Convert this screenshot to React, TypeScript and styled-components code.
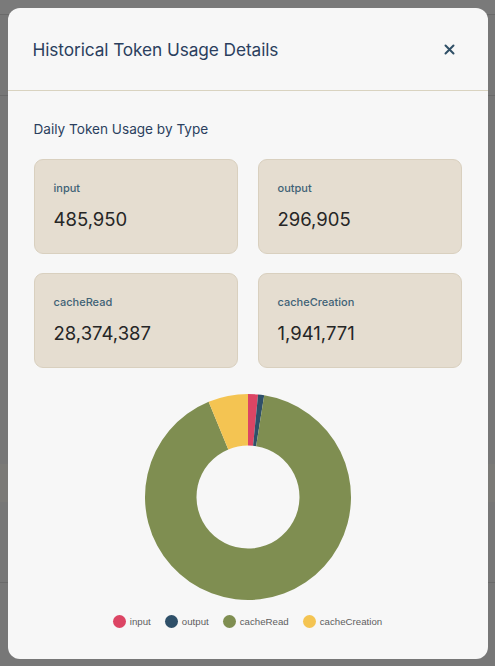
import React from "react";
import styled, { createGlobalStyle } from "styled-components";

const GlobalStyle = createGlobalStyle`
  html, body { margin: 0; padding: 0; }
  body {
    background: #777777;
    font-family: Inter, "Noto Sans", "Liberation Sans", sans-serif;
    -webkit-font-smoothing: antialiased;
  }
`;

const Screen = styled.div`
  position: relative;
  width: 495px;
  height: 666px;
  overflow: hidden;
  background: #777777;
`;

/* dimmed page content behind the overlay */
const BehindPage = styled.div`
  display: flex;
  flex-direction: column;
  height: 100%;
`;

const BehindBar = styled.div<{ $h: number; $bg?: string; $line?: boolean }>`
  height: ${(p) => p.$h}px;
  flex: none;
  background: ${(p) => p.$bg ?? "transparent"};
  border-bottom: ${(p) => (p.$line ? "1px solid #6a6a6a" : "none")};
`;

const Overlay = styled.div`
  position: absolute;
  inset: 0;
  display: flex;
  justify-content: center;
  padding-top: 8px;
  box-sizing: border-box;
`;

const Modal = styled.div`
  width: 480px;
  height: 651px;
  background: #f7f7f7;
  border-radius: 12px;
  display: flex;
  flex-direction: column;
  overflow: hidden;
`;

const Header = styled.div`
  height: 82px;
  flex: none;
  display: flex;
  align-items: center;
  justify-content: space-between;
  padding: 0 30px 0 25px;
  border-bottom: 1px solid #d9d3c0;
`;

const Title = styled.h2`
  margin: 0;
  margin-top: 1px;
  font-size: 17.3px;
  font-weight: 400;
  color: #2b3f5e;
  letter-spacing: -0.1px;
`;

const CloseButton = styled.button`
  border: none;
  background: none;
  padding: 0;
  width: 16px;
  height: 16px;
  display: flex;
  align-items: center;
  justify-content: center;
  color: #2f4f66;
  cursor: pointer;
`;

const Body = styled.div`
  padding: 29px 26px 0 26px;
  display: flex;
  flex-direction: column;
`;

const SectionTitle = styled.h3`
  margin: 0 0 21px 0;
  font-size: 13.6px;
  line-height: 18px;
  font-weight: 400;
  color: #2b3f5e;
`;

const CardGrid = styled.div`
  display: grid;
  grid-template-columns: 1fr 1fr;
  column-gap: 20px;
  row-gap: 19px;
`;

const Card = styled.div`
  height: 95px;
  box-sizing: border-box;
  background: #e5ddd0;
  border: 1px solid #d9d0bf;
  border-radius: 9px;
  padding: 21px 19px 0 19px;
  display: flex;
  flex-direction: column;
`;

const CardLabel = styled.div`
  font-size: 11px;
  line-height: 14px;
  font-weight: 500;
  color: #3f6276;
`;

const CardValue = styled.div`
  margin-top: 12px;
  font-size: 18.5px;
  line-height: 24px;
  font-weight: 400;
  color: #262626;
`;

const ChartWrap = styled.div`
  margin-top: 25px;
  display: flex;
  flex-direction: column;
  align-items: center;
`;

const Legend = styled.div`
  margin-top: 14px;
  display: flex;
  gap: 14px;
  font-family: "Liberation Sans", Arial, sans-serif;
  font-size: 9.7px;
  color: #5e5e5e;
`;

const LegendItem = styled.div`
  display: flex;
  align-items: center;
  gap: 4px;
`;

const Dot = styled.span<{ $c: string }>`
  width: 13px;
  height: 13px;
  border-radius: 50%;
  background: ${(p) => p.$c};
`;

const data = [
  { label: "input", value: 485950, color: "#dc4564" },
  { label: "output", value: 296905, color: "#2f5069" },
  { label: "cacheRead", value: 28374387, color: "#7f8e51" },
  { label: "cacheCreation", value: 1941771, color: "#f4c452" },
];

function Donut() {
  const size = 208;
  const cx = size / 2;
  const cy = size / 2;
  const R = 103;
  const r = 51.5;
  const total = data.reduce((s, d) => s + d.value, 0);
  let a = -Math.PI / 2;
  const pt = (rad: number, ang: number) => [cx + rad * Math.cos(ang), cy + rad * Math.sin(ang)];
  return (
    <svg width={size} height={size} viewBox={`0 0 ${size} ${size}`}>
      {data.map((d) => {
        const sweep = (d.value / total) * Math.PI * 2;
        const a0 = a;
        const a1 = a + sweep;
        a = a1;
        const large = sweep > Math.PI ? 1 : 0;
        const [x0, y0] = pt(R, a0);
        const [x1, y1] = pt(R, a1);
        const [x2, y2] = pt(r, a1);
        const [x3, y3] = pt(r, a0);
        const path = `M ${x0} ${y0} A ${R} ${R} 0 ${large} 1 ${x1} ${y1} L ${x2} ${y2} A ${r} ${r} 0 ${large} 0 ${x3} ${y3} Z`;
        return <path key={d.label} d={path} fill={d.color} />;
      })}
    </svg>
  );
}

export default function App() {
  return (
    <>
      <GlobalStyle />
      <Screen>
        <BehindPage>
          <BehindBar $h={14} $bg="#7a7a7a" $line />
          <BehindBar $h={80} $line />
          <BehindBar $h={368} />
          <BehindBar $h={38} $bg="#7b7a77" />
          <BehindBar $h={80} $line />
        </BehindPage>
        <Overlay>
          <Modal>
            <Header>
              <Title>Historical Token Usage Details</Title>
              <CloseButton aria-label="Close">
                <svg width="11" height="11" viewBox="0 0 11 11">
                  <path d="M1.5 1.5 L9.5 9.5 M9.5 1.5 L1.5 9.5" stroke="currentColor" strokeWidth="2" strokeLinecap="round" />
                </svg>
              </CloseButton>
            </Header>
            <Body>
              <SectionTitle>Daily Token Usage by Type</SectionTitle>
              <CardGrid>
                {data.map((d) => (
                  <Card key={d.label}>
                    <CardLabel>{d.label}</CardLabel>
                    <CardValue>{d.value.toLocaleString("en-US")}</CardValue>
                  </Card>
                ))}
              </CardGrid>
              <ChartWrap>
                <Donut />
                <Legend>
                  {data.map((d) => (
                    <LegendItem key={d.label}>
                      <Dot $c={d.color} />
                      {d.label}
                    </LegendItem>
                  ))}
                </Legend>
              </ChartWrap>
            </Body>
          </Modal>
        </Overlay>
      </Screen>
    </>
  );
}
